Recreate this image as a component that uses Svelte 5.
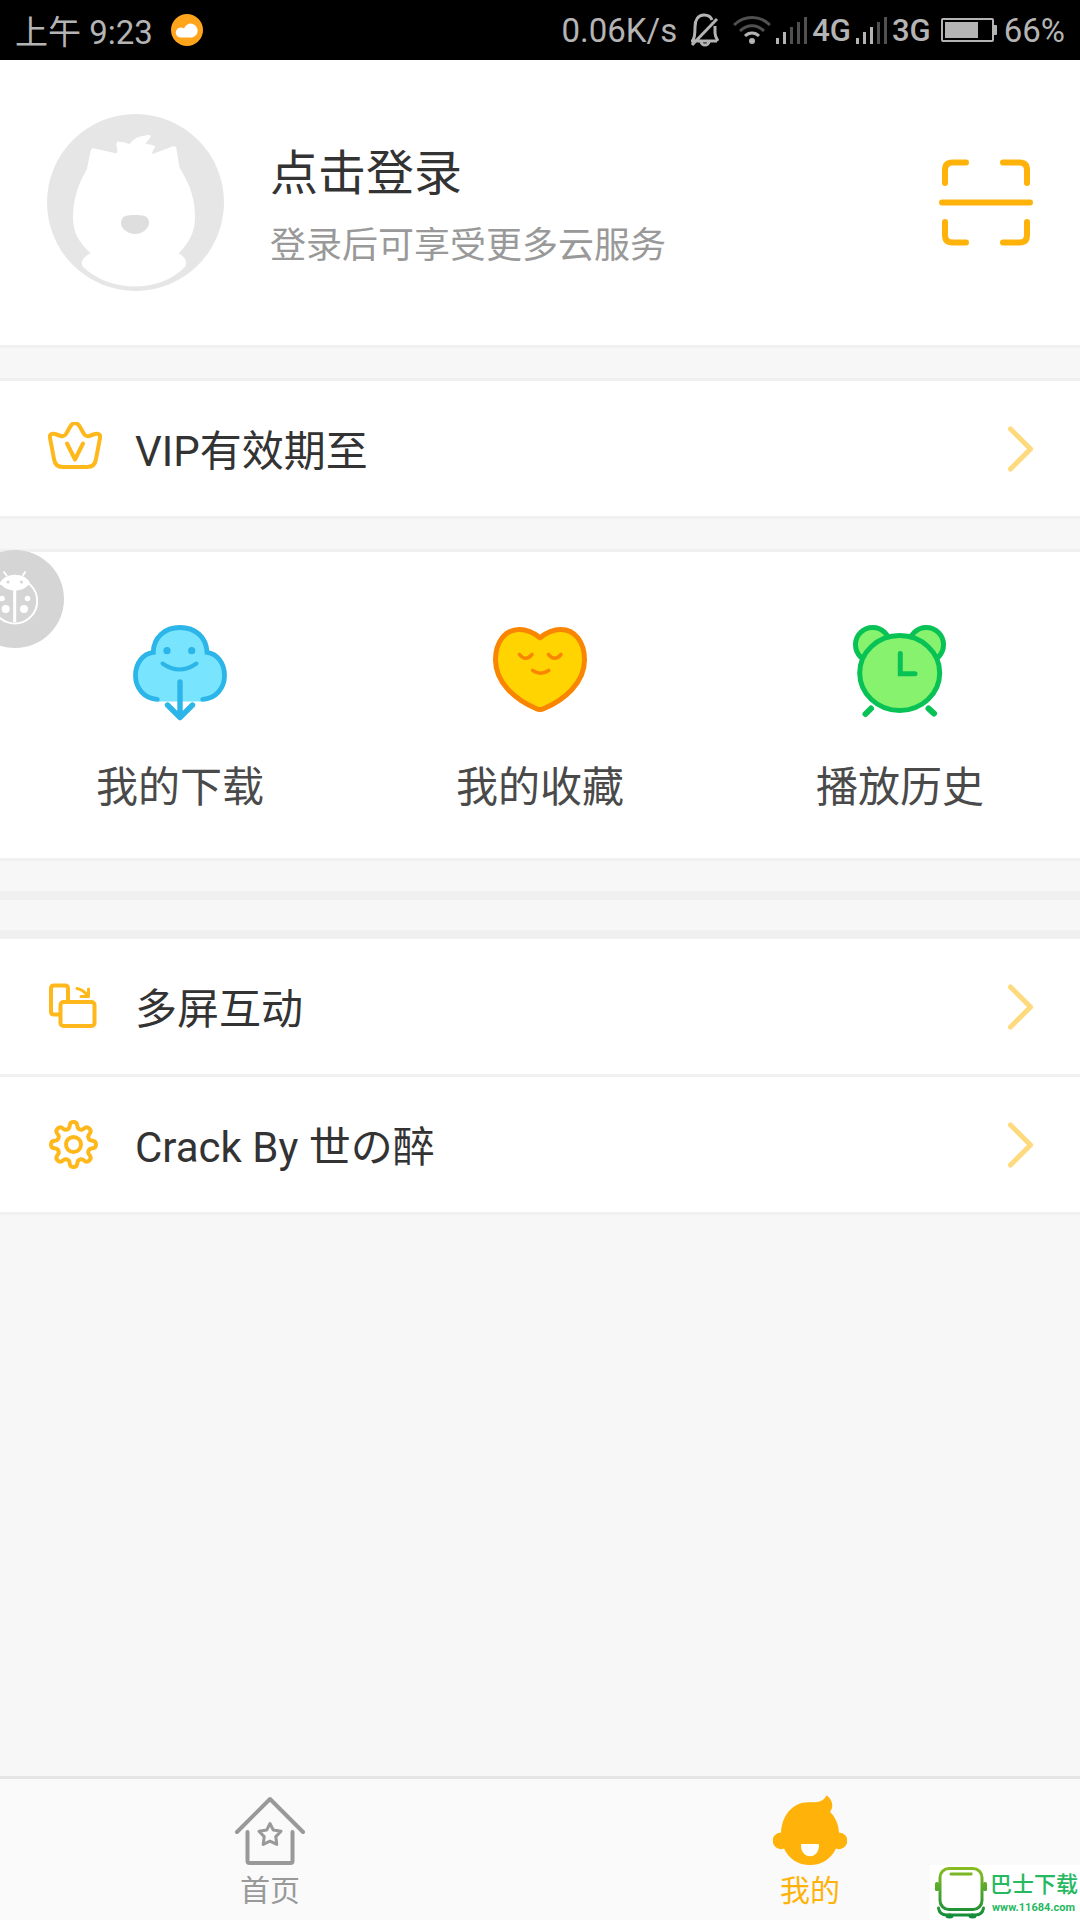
<script lang="ts">
	type Tab = 'home' | 'mine';

	let activeTab = $state<Tab>('mine');

	const shortcuts = [
		{ id: 'download', label: '我的下载' },
		{ id: 'favorite', label: '我的收藏' },
		{ id: 'history', label: '播放历史' }
	];

	const signals = [
		{ network: '4G', level: 2 },
		{ network: '3G', level: 3 }
	];

	// Eight rounded teeth around the gear's center
	function gearPath(cx: number, cy: number) {
		const points: string[] = [];
		for (let i = 0; i < 160; i++) {
			const angle = (i / 160) * Math.PI * 2;
			const r = 19.4 + 3.2 * Math.tanh(1.8 * Math.cos(8 * angle));
			points.push(`${(cx + r * Math.sin(angle)).toFixed(2)} ${(cy - r * Math.cos(angle)).toFixed(2)}`);
		}
		return `M${points.join('L')}Z`;
	}
</script>

{#snippet chevron()}
	<svg class="chevron" viewBox="0 0 27 48" width="27" height="48" aria-hidden="true">
		<path d="M3.500 4l20 20-20 20" />
	</svg>
{/snippet}

<div class="screen">
	<div class="status-bar">
		<span class="clock">上午 9:23</span>
		<svg class="weather" viewBox="0 0 32 32" width="32" height="32" aria-hidden="true">
			<circle cx="16" cy="16" r="16" fill="#ffa41b" />
			<path d="M10 23.500a5 5 0 0 1-.5-10c1.500 0 2.500.3 3.500 1a7 7 0 1 1 8 9z" fill="#fff" />
		</svg>
		<div class="status-right">
			<span>0.06K/s</span>
			<svg class="bell" viewBox="0 0 30 34" width="30" height="34" aria-hidden="true">
				<path d="M2 28h26M4 27c2-3 2-7 2-13 0-7 3-12 9-12 4 0 7 2 8 5M26 13v7c0 3 1 5 3 8M12 29c1 4 7 4 8 0M3 32L28 6" />
			</svg>
			<svg viewBox="0 0 38 30" width="38" height="30" aria-hidden="true">
				<g fill="none" stroke="#505050" stroke-width="3">
					<path d="M1 10c10-10 26-10 36 0" />
					<path d="M7 16c7-7 17-7 24 0" />
				</g>
				<path d="M12 21c4-4 10-4 14 0" fill="none" stroke="#b4b4b4" stroke-width="3" />
				<circle cx="19" cy="26" r="3" fill="#b4b4b4" />
			</svg>
			{#each signals as signal (signal.network)}
				<svg viewBox="0 0 31 28" width="31" height="28" aria-hidden="true">
					{#each [6, 12, 17, 22, 27] as h, i}
						<rect x={i * 7} y={28 - h} width="3" height={h} fill={i < signal.level ? '#b4b4b4' : '#505050'} />
					{/each}
				</svg>
				<span class="network">{signal.network}</span>
			{/each}
			<svg class="battery" viewBox="0 0 56 24" width="56" height="24" aria-hidden="true">
				<rect x="1" y="1" width="51" height="22" rx="1" fill="none" stroke="#b4b4b4" stroke-width="2" />
				<rect x="4" y="4" width="33" height="16" fill="#b4b4b4" />
				<rect x="52" y="7" width="4" height="10" rx="1" fill="#b4b4b4" />
			</svg>
			<span>66%</span>
		</div>
	</div>

	<header class="profile">
		<button class="login">
			<svg class="avatar" viewBox="0 0 177 177" width="177" height="177" aria-hidden="true">
				<circle cx="88.500" cy="88.500" r="88.500" fill="#e6e6e6" />
				<path
					d="M40 55L43.500 37q.5-3.500 4-2.500l22 5q1.500-2 .5-6-1.500-5 1-6 5 0 11.500 2.500 5-8 19-9 4 0 1 3.500-3 3-4 5.500 7 0 10 3-4 4-3 7l20-7.500q4-1 4 3l3 18C144 72 148 86 148 104c0 14-6 25-16.400 35.300C138 143 141 148 138 153 112 179 64 179 36 153 33 148 36 143 43.600 139.300 31 128 26 117 26 104 26 86 31 70 40 55z"
					fill="#fff"
				/>
				<path d="M74 109c0-8 7-8 14-8s14 0 14 8c0 6-7 11-14 11s-14-5-14-11z" fill="#dedede" />
			</svg>
			<span class="login-text">
				<span class="login-title">点击登录</span>
				<span class="login-hint">登录后可享受更多云服务</span>
			</span>
		</button>
		<button class="scan" aria-label="扫一扫">
			<svg viewBox="0 0 94 87" width="94" height="87" aria-hidden="true">
				<path
					d="M6 24V11q0-7.500 7.500-7.500H27M64 3.500h16.500q7.500 0 7.500 7.500v13M88 63v13q0 7.500-7.500 7.500H64M27 83.500H13.500Q6 83.500 6 76V63M3 43.500h88"
				/>
			</svg>
		</button>
	</header>

	<button class="row vip">
		<svg class="row-icon" viewBox="0 1 54 54" width="54" height="54" aria-hidden="true">
			<path
				d="M27 2q3 0 5 4l4 7q2 3 5 2l6-2q6-1 5 4l-4 21q-1 8-9 8H15q-8 0-9-8L2 17q-1-5 5-4l6 2q3 1 5-2l4-7q2-4 5-4z"
			/>
			<path d="M19 22.500l8 16 8-16" />
		</svg>
		<span class="row-label">VIP有效期至</span>
		{@render chevron()}
	</button>

	<section class="shortcuts">
		{#each shortcuts as item (item.id)}
			<button class="shortcut">
				<svg viewBox="0 0 94 96" width="94" height="96" aria-hidden="true">
					{#if item.id === 'download'}
						<rect x="24" y="70" width="46" height="6.500" fill="#78e4fd" />
						<g fill="none" stroke="#2bb5e8" stroke-width="4.800" stroke-linecap="round" stroke-linejoin="round">
							<path
								d="M24.300 74.300C11 73.500 2.500 63 2.500 50.500 2.500 38 10 28.500 20.300 27.300 20.500 12 32 2.500 47 2.500S73.500 12 74 27.300C84 28.500 91.500 38 91.500 50.500 91.500 63 83 73.500 69.700 74.300"
								fill="#78e4fd"
								stroke-linejoin="miter"
							/>
							<path d="M29.500 38.500q17 12 34 0" stroke-width="4" />
							<path d="M47 57v35M34.500 80L47 92.500 59.500 80" stroke-width="5.400" />
						</g>
						<circle cx="34" cy="25.700" r="3.600" fill="#2bb5e8" />
						<circle cx="58.700" cy="25.700" r="3.600" fill="#2bb5e8" />
					{:else if item.id === 'favorite'}
						<g fill="none" stroke="#f98500" stroke-width="5" stroke-linecap="round" stroke-linejoin="round">
							<path
								d="M47 12.700C40 7 33 4.500 26.300 4.500 12 4.500 2.500 17 2.500 35 2.500 58 23 75 43 83.500q4 2 8 0C71 75 91.500 58 91.500 35 91.500 17 82 4.500 67.700 4.500 61 4.500 54 7 47 12.700z"
								fill="#ffd400"
							/>
							<path
								d="M26.500 29.500q6 7.500 12.500 0M55.500 29.500q6 7.500 12.500 0M39.700 45.500q8 5.500 16 0"
								stroke-width="3.600"
							/>
						</g>
					{:else}
						<g fill="#87f26d" stroke="#09c256" stroke-width="5" stroke-linecap="round">
							<circle cx="19.700" cy="19.700" r="17.200" />
							<circle cx="73.300" cy="19.700" r="17.200" />
							<ellipse cx="46.700" cy="48" rx="40" ry="37.500" />
							<path d="M47.300 28.500v20.200H62" fill="none" />
							<path d="M18 83.500l-5.500 5.500M75.500 83.500l5.500 5" stroke-width="6" />
						</g>
					{/if}
				</svg>
				<span>{item.label}</span>
			</button>
		{/each}
	</section>

	<div class="empty-group"></div>

	<section class="menu">
		<button class="row">
			<svg class="row-icon" viewBox="0 0 54 54" width="54" height="54" aria-hidden="true">
				<path d="M12 34.500H6q-3 0-3-3v-23Q3 5.500 6 5.500h11q3 0 3 3V21" />
				<rect x="12.500" y="22" width="34" height="24" rx="3" />
				<path d="M29 8.500q6 1 10.500 7M40.500 9v7.500H33" stroke-width="3" />
			</svg>
			<span class="row-label">多屏互动</span>
			{@render chevron()}
		</button>
		<button class="row">
			<svg class="row-icon" viewBox="0 0 54 54" width="54" height="54" aria-hidden="true">
				<path d={gearPath(25.5, 26.5)} />
				<circle cx="25.500" cy="26.500" r="7.500" />
			</svg>
			<span class="row-label">Crack By 世の醉</span>
			{@render chevron()}
		</button>
	</section>

	<nav class="tabs">
		<button class="tab" class:active={activeTab === 'home'} onclick={() => (activeTab = 'home')}>
			<svg viewBox="0 0 74 70" width="74" height="70" aria-hidden="true">
				<g fill="none" stroke="currentColor" stroke-width="4" stroke-linecap="round" stroke-linejoin="round">
					<path d="M4 37L37 4l33 33" />
					<path d="M14.500 37v29q0 2 2 2h41q2 0 2-2V37" />
					<path
						d="M37 28.500l3.300 6.600 7.700 1.200-5.200 5.300 1 7.800-6.800-3.200-6.800 3.200 1-7.800-5.200-5.300 7.700-1.200z"
						stroke-width="3"
					/>
				</g>
			</svg>
			<span>首页</span>
		</button>
		<button class="tab" class:active={activeTab === 'mine'} onclick={() => (activeTab = 'mine')}>
			<svg viewBox="0 0 74 70" width="74" height="70" aria-hidden="true">
				<path
					d="M8 37.500C9 20 20 7.300 35 7.300c9 0 16 0 18.300-7 6 4 8 11 3.700 16.500 5 5 8.500 12 9 20.700a8.300 8.300 0 1 1-3 16C58 64 49 70 37 70S16 64 11 53.500a8.300 8.300 0 1 1-3-16z"
					fill="currentColor"
				/>
				<path d="M28 50q0-1 1-1h16q1 0 1 1c0 7-4 11.300-9 11.300S28 57 28 50z" fill="#fff" />
			</svg>
			<span>我的</span>
		</button>
	</nav>

	<button class="debug-float" aria-label="debug">
		<svg viewBox="0 0 98 98" width="98" height="98" aria-hidden="true">
			<g fill="none" stroke="#fff" stroke-width="2">
				<circle cx="48.700" cy="51" r="22.500" />
				<path d="M48.700 40v32" stroke-width="3" />
				<path d="M41 26l-3.500-4.500M56.500 26l3-4.500" />
			</g>
			<path d="M34 33c5-11 25-11 30 0-6 10-24 10-30 0z" fill="#fff" />
			<g fill="#d5d5d5">
				<circle cx="42" cy="32" r="1.500" />
				<circle cx="55.500" cy="32" r="1.500" />
			</g>
			<g fill="#fff">
				<circle cx="36" cy="48.500" r="2.800" />
				<circle cx="61.500" cy="48.500" r="2.800" />
				<circle cx="39.700" cy="59" r="4" />
				<circle cx="58" cy="59" r="4" />
			</g>
		</svg>
	</button>

	<a class="site-mark" href="http://www.11684.com">
		<svg viewBox="0 0 60 55" width="60" height="55" aria-hidden="true">
			<defs>
				<linearGradient id="bus" x1="0" y1="0" x2="0" y2="55" gradientUnits="userSpaceOnUse">
					<stop offset="0" stop-color="#8fbf1f" />
					<stop offset="1" stop-color="#0a8a3c" />
				</linearGradient>
			</defs>
			<g fill="none" stroke="url(#bus)" stroke-width="3" stroke-linecap="round">
				<rect x="10" y="3.500" width="42" height="41" rx="9" />
				<path d="M21 9h20v.1" />
				<path d="M8.500 43q1 7 8 7h29q7 0 8-7" />
			</g>
			<g fill="url(#bus)">
				<rect x="5" y="17" width="4" height="9" rx="1.500" />
				<rect x="53" y="17" width="4" height="9" rx="1.500" />
				<ellipse cx="19.500" cy="51" rx="4" ry="2.500" />
				<ellipse cx="42.500" cy="51" rx="4" ry="2.500" />
			</g>
		</svg>
		<span class="site-text">
			<span class="site-name">巴士下载</span>
			<span class="site-url">www.11684.com</span>
		</span>
	</a>
</div>

<style>
	:global(body) {
		background: #f7f7f7;
	}

	.screen {
		position: relative;
		display: flex;
		flex-direction: column;
		min-height: 100vh;
		background: #f7f7f7;
		color: #333;
		font-family: Roboto, 'Noto Sans CJK SC', sans-serif;
		overflow: hidden;
	}

	button {
		margin: 0;
		padding: 0;
		border: none;
		background: none;
		color: inherit;
		font: inherit;
		text-align: left;
		cursor: pointer;
	}

	svg {
		display: block;
		flex-shrink: 0;
	}

	.status-bar {
		display: flex;
		align-items: center;
		height: 60px;
		padding: 0 15px;
		background: #000;
		color: #b4b4b4;
		font-size: 33px;
	}

	.weather {
		margin-left: 18px;
	}

	.status-right {
		display: flex;
		align-items: center;
		gap: 5px;
		margin-left: auto;
	}

	.bell {
		margin: 0 9px 0 7px;
		fill: none;
		stroke: #b4b4b4;
		stroke-width: 3;
	}

	.network {
		font-size: 31px;
		font-weight: 500;
	}

	.battery {
		margin: 0 2px 0 5px;
	}

	.profile {
		display: flex;
		align-items: center;
		justify-content: space-between;
		padding: 54px 47px;
		background: #fff;
		border-bottom: 3px solid #f0f0f0;
	}

	.login {
		display: flex;
		align-items: center;
		gap: 46px;
	}

	.login-text {
		display: flex;
		flex-direction: column;
		gap: 18px;
		padding-top: 9px;
	}

	.login-title {
		font-size: 48px;
		line-height: 60px;
	}

	.login-hint {
		color: #999;
		font-size: 36px;
		line-height: 48px;
	}

	.scan path {
		fill: none;
		stroke: #ffb30a;
		stroke-width: 6;
		stroke-linecap: round;
	}

	.row {
		display: flex;
		align-items: center;
		gap: 33px;
		width: 100%;
		height: 138px;
		padding: 0 46px 0 48px;
		background: #fff;
		border-bottom: 3px solid #f0f0f0;
		font-size: 42px;
	}

	.vip {
		height: 141px;
		margin-top: 30px;
		border-top: 3px solid #f0f0f0;
	}

	.row-icon {
		fill: none;
		stroke: #ffb81c;
		stroke-width: 4;
		stroke-linecap: round;
		stroke-linejoin: round;
	}

	.row-label {
		flex: 1;
		padding-bottom: 3px;
	}

	.chevron {
		fill: none;
		stroke: #ffd97d;
		stroke-width: 5;
		stroke-linecap: round;
		stroke-linejoin: round;
	}

	.shortcuts {
		display: grid;
		grid-template-columns: repeat(3, 1fr);
		margin-top: 30px;
		background: #fff;
		border-top: 3px solid #f0f0f0;
		border-bottom: 3px solid #f0f0f0;
	}

	.shortcut {
		display: flex;
		flex-direction: column;
		align-items: center;
		gap: 37px;
		padding: 73px 0 40px;
		color: #4a4a4a;
		font-size: 42px;
		line-height: 60px;
	}

	.empty-group {
		height: 30px;
		margin-top: 30px;
		border-top: 9px solid #f0f0f0;
		border-bottom: 9px solid #f0f0f0;
	}

	.tabs {
		display: grid;
		grid-template-columns: 1fr 1fr;
		margin-top: auto;
		background: #fafafa;
		border-top: 3px solid #e5e5e5;
	}

	.tab {
		display: flex;
		flex-direction: column;
		align-items: center;
		gap: 6px;
		padding: 16px 0 9px;
		color: #999;
		font-size: 30px;
		line-height: 40px;
	}

	.tab.active {
		color: #ffb30a;
	}

	.debug-float {
		position: absolute;
		top: 550px;
		left: -34px;
		border-radius: 50%;
		background: #d5d5d5;
	}

	.site-mark {
		position: absolute;
		right: 0;
		bottom: 0;
		display: flex;
		width: 150px;
		height: 55px;
		background: #fff;
		color: #27b862;
		text-decoration: none;
	}

	.site-text {
		display: flex;
		flex-direction: column;
		padding-top: 6px;
		white-space: nowrap;
	}

	.site-name {
		font-size: 22px;
		font-weight: 500;
		line-height: 28px;
	}

	.site-url {
		padding-left: 2px;
		font-size: 11px;
		font-weight: 700;
		line-height: 18px;
	}
</style>
